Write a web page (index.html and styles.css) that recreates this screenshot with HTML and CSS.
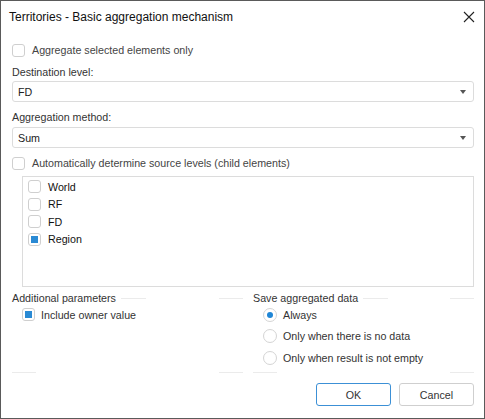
FILE: index.html
```html
<!DOCTYPE html>
<html>
<head>
<meta charset="utf-8">
<link rel="stylesheet" href="styles.css">
</head>
<body>
<div class="window">
  <div class="titlebar">
    <span class="title">Territories - Basic aggregation mechanism</span>
    <svg class="close" width="12" height="12" viewBox="0 0 12 12"><path d="M1 1 L11 11 M11 1 L1 11" stroke="#222" stroke-width="1.1" fill="none"/></svg>
  </div>
  <div class="content">
    <div class="row cb-row r1"><span class="cb"></span><span class="lbl dim">Aggregate selected elements only</span></div>
    <div class="row label r2">Destination level:</div>
    <div class="dd"><span>FD</span><span class="arrow"></span></div>
    <div class="row label r3">Aggregation method:</div>
    <div class="dd"><span>Sum</span><span class="arrow"></span></div>
    <div class="row cb-row r4"><span class="cb"></span><span class="lbl dim">Automatically determine source levels (child elements)</span></div>
    <div class="list">
      <div class="item"><span class="cb"></span><span class="itext">World</span></div>
      <div class="item"><span class="cb"></span><span class="itext">RF</span></div>
      <div class="item"><span class="cb"></span><span class="itext">FD</span></div>
      <div class="item"><span class="cb checked"></span><span class="itext">Region</span></div>
    </div>
    <div class="groups">
      <div class="group left">
        <div class="ghead"><span class="gtitle">Additional parameters</span><span class="seg first"></span><span class="spacer"></span><span class="seg"></span></div>
        <div class="gbody">
          <div class="grow"><span class="cb checked"></span><span class="lbl">Include owner value</span></div>
        </div>
        <div class="gfoot"><span class="seg"></span><span class="spacer"></span><span class="seg"></span></div>
      </div>
      <div class="group right">
        <div class="ghead"><span class="gtitle">Save aggregated data</span><span class="seg first"></span><span class="spacer"></span><span class="seg"></span></div>
        <div class="gbody">
          <div class="grow"><span class="rb checked"></span><span class="lbl">Always</span></div>
          <div class="grow"><span class="rb"></span><span class="lbl">Only when there is no data</span></div>
          <div class="grow"><span class="rb"></span><span class="lbl">Only when result is not empty</span></div>
        </div>
        <div class="gfoot"><span class="seg"></span><span class="spacer"></span><span class="seg"></span></div>
      </div>
    </div>
    <div class="buttons">
      <button class="btn primary">OK</button>
      <button class="btn">Cancel</button>
    </div>
  </div>
</div>
</body>
</html>
```
FILE: styles.css
```css
html, body {
  margin: 0;
  padding: 0;
  background: #fff;
}
body {
  font-family: "Liberation Sans", Arial, sans-serif;
  font-size: 10.7px;
  color: #333;
}
.window {
  width: 485px;
  height: 419px;
  box-sizing: border-box;
  border: 1px solid #5a5a5a;
  background: #fff;
  display: flex;
  flex-direction: column;
}
.titlebar {
  height: 31px;
  display: flex;
  align-items: center;
  justify-content: space-between;
  padding: 0 9px 0 8px;
}
.title {
  font-size: 12px;
  color: #111;
}
.close {
  display: block;
}
.content {
  padding: 0 10px 0 11px;
  display: flex;
  flex-direction: column;
}
.row {
  height: 16px;
  display: flex;
  align-items: center;
}
.r1 { margin-top: 10px; }
.r2 { margin-top: 6px; margin-bottom: 1px; }
.r3 { margin-top: 7px; margin-bottom: 2px; }
.r4 { margin-top: 7px; margin-bottom: 5px; }
.label { color: #333; }
.dim { color: #444; }
.cb {
  width: 13px;
  height: 13px;
  box-sizing: border-box;
  border: 1px solid #cfcfcf;
  border-radius: 3px;
  background: #fff;
  display: inline-flex;
  align-items: center;
  justify-content: center;
  flex-shrink: 0;
}
.cb.checked::after {
  content: "";
  width: 7px;
  height: 7px;
  background: #2a8ad4;
}
.cb-row .lbl { margin-left: 7px; }
.dd {
  height: 21px;
  box-sizing: border-box;
  border: 1px solid #dcdcdc;
  border-radius: 3px;
  display: flex;
  align-items: center;
  justify-content: space-between;
  padding: 0 7px 0 5px;
  color: #222;
}
.arrow {
  width: 0;
  height: 0;
  border-left: 3px solid transparent;
  border-right: 3px solid transparent;
  border-top: 4px solid #555;
}
.list {
  margin-left: 10px;
  height: 111px;
  box-sizing: border-box;
  border: 1px solid #dcdcdc;
  padding: 1px 0 0 5px;
  display: flex;
  flex-direction: column;
}
.item {
  height: 17.5px;
  display: flex;
  align-items: center;
}
.itext {
  margin-left: 7px;
  color: #111;
}
.groups {
  display: flex;
  gap: 10px;
  margin-top: 3px;
}
.group {
  display: flex;
  flex-direction: column;
}
.group.left { width: 231px; flex: none; }
.group.right { flex: 1; }
.ghead {
  height: 16px;
  display: flex;
  align-items: center;
}
.gtitle { color: #333; }
.seg {
  width: 24px;
  height: 1px;
  background: #ebebeb;
}
.seg.first { margin-left: 5px; width: 25px; }
.spacer { flex: 1; }
.gbody {
  display: flex;
  flex-direction: column;
  padding-left: 10px;
  margin-top: -2px;
  height: 67px;
}
.grow {
  height: 21.5px;
  display: flex;
  align-items: center;
}
.grow .lbl { margin-left: 6px; color: #333; }
.rb {
  width: 14px;
  height: 14px;
  box-sizing: border-box;
  border: 1px solid #d4d4d4;
  border-radius: 50%;
  display: inline-flex;
  align-items: center;
  justify-content: center;
  flex-shrink: 0;
}
.rb.checked::after {
  content: "";
  width: 6px;
  height: 6px;
  border-radius: 50%;
  background: #1f86d6;
}
.gfoot {
  height: 3px;
  display: flex;
  align-items: center;
}
.buttons {
  display: flex;
  justify-content: flex-end;
  gap: 8px;
  margin-top: 9px;
}
.btn {
  width: 75px;
  height: 23px;
  box-sizing: border-box;
  border: 1px solid #cfcfcf;
  border-radius: 3px;
  background: #fff;
  font-family: "Liberation Sans", Arial, sans-serif;
  font-size: 10.7px;
  color: #333;
  padding: 0;
}
.btn.primary {
  border-color: #3c90d6;
}
```
